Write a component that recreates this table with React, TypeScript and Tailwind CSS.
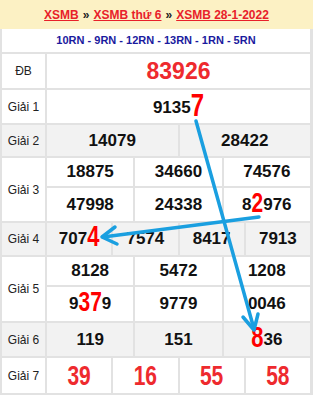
import React from "react";

const B = "border-[#e2e2e2]";

function Hi({ children, size = "text-[22px]" }: { children: React.ReactNode; size?: string }) {
  return (
    <span className={`inline-block ${size} leading-none text-[#ff0000] scale-y-[1.33] align-baseline`}>
      {children}
    </span>
  );
}

function Label({ children }: { children: React.ReactNode }) {
  return (
    <div className={`w-[45px] shrink-0 border-r-2 ${B} flex items-center justify-center text-[12px] text-[#222]`}>
      {children}
    </div>
  );
}

function Cells({ items, h, last = false }: { items: React.ReactNode[]; h: string; last?: boolean }) {
  return (
    <div className={`flex ${h} ${last ? "" : `border-b-2 ${B}`}`}>
      {items.map((it, i) => (
        <div
          key={i}
          className={`flex-1 flex items-center justify-center font-bold text-[17px] text-[#111] ${i > 0 ? `border-l-2 ${B}` : ""}`}
        >
          {it}
        </div>
      ))}
    </div>
  );
}

export default function App() {
  return (
    <div className="relative w-[313px] h-[395px] bg-white overflow-hidden font-['Liberation_Sans',Arial,sans-serif]">
      <div className="h-[29px] bg-[#fcf1c4] flex items-center justify-center text-[12px] font-bold gap-[4px]">
        <span className="text-[#e8212a] underline">XSMB</span>
        <span className="text-[#222]">»</span>
        <span className="text-[#e8212a] underline">XSMB thứ 6</span>
        <span className="text-[#222]">»</span>
        <span className="text-[#e8212a] underline">XSMB 28-1-2022</span>
      </div>
      <div className={`border-l-2 border-r-[3px] ${B}`}>
        <div className={`h-[25px] flex items-center justify-center border-b-2 ${B} text-[11px] font-bold text-[#1a1a9e]`}>
          10RN - 9RN - 12RN - 13RN - 1RN - 5RN
        </div>

        {/* DB */}
        <div className={`flex h-[36px] border-b-2 ${B}`}>
          <Label>ĐB</Label>
          <div className="flex-1 flex items-center justify-center font-bold text-[23px] text-[#ee2a2e]">83926</div>
        </div>

        {/* G1 */}
        <div className={`flex h-[35px] border-b-2 ${B}`}>
          <Label>Giải 1</Label>
          <div className="flex-1 flex items-center justify-center font-bold text-[17px] text-[#111]">
            <span>
              9135<Hi size="text-[24px]">7</Hi>
            </span>
          </div>
        </div>

        {/* G2 */}
        <div className={`flex h-[33px] border-b-2 ${B} bg-[#f2f2f2]`}>
          <Label>Giải 2</Label>
          <div className="flex-1 flex flex-col">
            <Cells items={["14079", "28422"]} h="h-full" last />
          </div>
        </div>

        {/* G3 */}
        <div className={`flex h-[65px] border-b-2 ${B}`}>
          <Label>Giải 3</Label>
          <div className="flex-1 flex flex-col">
            <Cells items={["18875", "34660", "74576"]} h="h-[30px]" />
            <Cells
              items={[
                "47998",
                "24338",
                <span key="a">
                  8<Hi size="text-[21px]">2</Hi>976
                </span>,
              ]}
              h="flex-1"
              last
            />
          </div>
        </div>

        {/* G4 */}
        <div className={`flex h-[34px] border-b-2 ${B} bg-[#f2f2f2]`}>
          <Label>Giải 4</Label>
          <div className="flex-1 flex flex-col">
            <Cells
              items={[
                <span key="a">
                  707<Hi size="text-[22px]">4</Hi>
                </span>,
                "7574",
                "8417",
                "7913",
              ]}
              h="h-full"
              last
            />
          </div>
        </div>

        {/* G5 */}
        <div className={`flex h-[66px] border-b-2 ${B}`}>
          <Label>Giải 5</Label>
          <div className="flex-1 flex flex-col">
            <Cells items={["8128", "5472", "1208"]} h="h-[30px]" />
            <Cells
              items={[
                <span key="a">
                  9<Hi size="text-[21px]">37</Hi>9
                </span>,
                "9779",
                "0046",
              ]}
              h="flex-1"
              last
            />
          </div>
        </div>

        {/* G6 */}
        <div className={`flex h-[35px] border-b-2 ${B} bg-[#f2f2f2]`}>
          <Label>Giải 6</Label>
          <div className="flex-1 flex flex-col">
            <Cells
              items={[
                "119",
                "151",
                <span key="a">
                  <Hi size="text-[22px]">8</Hi>36
                </span>,
              ]}
              h="h-full"
              last
            />
          </div>
        </div>

        {/* G7 */}
        <div className={`flex h-[37px] border-b-2 ${B}`}>
          <Label>Giải 7</Label>
          <div className="flex-1 flex">
            {["39", "16", "55", "58"].map((n, i) => (
              <div
                key={n}
                className={`flex-1 flex items-center justify-center font-bold ${i > 0 ? `border-l-2 ${B}` : ""}`}
              >
                <span className="inline-block text-[21px] leading-none text-[#ee2a2e] scale-y-[1.33]">{n}</span>
              </div>
            ))}
          </div>
        </div>
      </div>

      <svg className="absolute left-0 top-0 pointer-events-none" width="313" height="395" viewBox="0 0 313 395">
        <g stroke="#1a9fe0" strokeWidth="3.5" fill="none" strokeLinecap="round" strokeLinejoin="round">
          <line x1="196" y1="121" x2="254" y2="329" />
          <polyline points="243,317 254,330 258,314" />
          <line x1="259" y1="217" x2="103" y2="237" />
          <polyline points="115,227 102,237 117,244" />
        </g>
      </svg>
    </div>
  );
}
